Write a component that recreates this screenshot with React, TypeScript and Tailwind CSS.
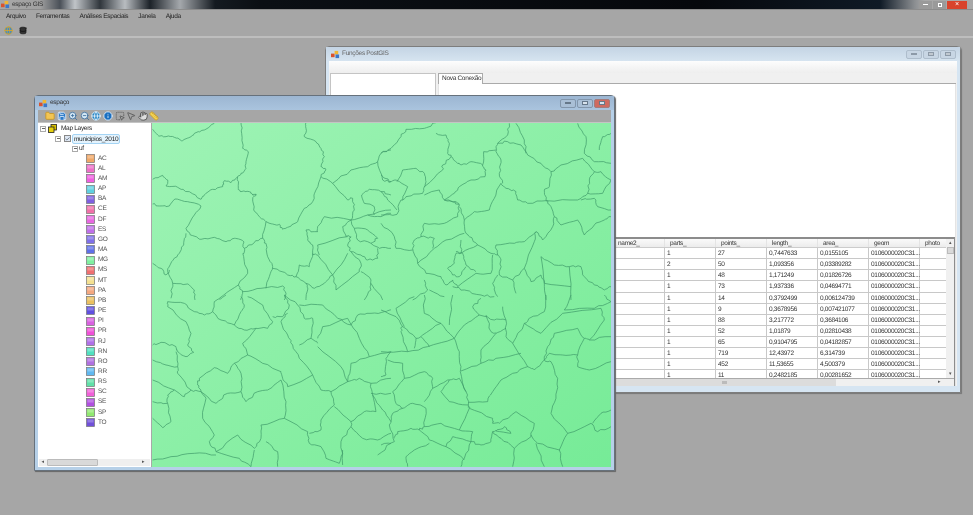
import { Folder, Save, ZoomIn, ZoomOut, Globe, Info, SquareDashedMousePointer, MousePointer2, Hand, Ruler, Database, Check } from "lucide-react";

const menus = ["Arquivo", "Ferramentas", "Análises Espaciais", "Janela", "Ajuda"];

const layers = [
  ["AC", "#f0a868"], ["AL", "#ee70c8"], ["AM", "#f060e0"], ["AP", "#60d0e0"], ["BA", "#7f60e0"],
  ["CE", "#f070a8"], ["DF", "#e868e0"], ["ES", "#c070e8"], ["GO", "#8070e8"], ["MA", "#6070e8"],
  ["MG", "#80f0a0"], ["MS", "#f07070"], ["MT", "#f4e090"], ["PA", "#f4a880"], ["PB", "#eac060"],
  ["PE", "#6050e0"], ["PI", "#d860e0"], ["PR", "#f050d8"], ["RJ", "#b070e8"], ["RN", "#50e0c0"],
  ["RO", "#b070e0"], ["RR", "#60b8f0"], ["RS", "#60e0a8"], ["SC", "#f060d8"], ["SE", "#b050e0"],
  ["SP", "#90e870"], ["TO", "#7050d8"],
];

const rows = [
  ["1", "27", "0,7447633", "0,0155105"],
  ["2", "50", "1,093356", "0,03389282"],
  ["1", "48", "1,171249", "0,01826726"],
  ["1", "73", "1,937336", "0,04694771"],
  ["1", "14", "0,3792499", "0,006124739"],
  ["1", "9", "0,3678956", "0,007421077"],
  ["1", "88", "3,217772", "0,3684106"],
  ["1", "52", "1,01879", "0,02810438"],
  ["1", "65", "0,9104795", "0,04182857"],
  ["1", "719", "12,43972", "6,314739"],
  ["1", "452", "11,53655", "4,500379"],
  ["1", "11", "0,2482185", "0,00281652"],
];

// borders traced by hand from 3x crops of the map, one group per crop
const borders: { x: number; y: number; lines: string[] }[] = [
  {
    x: 150,
    y: 120,
    lines: [
      "5,28 20,45 45,50 70,52 95,62 120,50 135,38 160,30 190,10",
      "270,8 272,40 275,85 292,95 285,125 285,145 270,160 260,170 262,205 270,215 295,215 305,225 315,222 305,240 308,270 325,290 345,305 365,312 385,313 395,328 410,322 440,305 460,265 485,245 495,210 510,170 525,150 510,140 520,110 510,85 495,65 460,50 465,25 465,8",
      "5,178 35,166 50,180 45,198 80,202 115,215 150,238 160,225 185,208 215,200 220,182 240,188 260,170",
      "5,252 25,258 55,258 72,237 110,245 150,258 130,285 105,325 118,345 150,358 190,352 225,365 250,355 275,362 280,385 310,368 335,355 345,305",
      "105,340 98,375 80,405 62,425 50,455 65,490 60,535",
      "5,430 30,445 45,465 55,450",
      "65,490 110,492 130,510 132,540",
      "335,355 345,370 350,410 365,440 355,470 345,505",
      "280,385 278,410 290,460 262,495 205,535",
      "365,445 410,465 435,470 445,435 475,440 485,400 500,405 545,465 520,490 490,505 465,490 435,470",
      "262,495 275,520 270,540",
      "275,515 330,505 395,498 405,520 400,540",
      "465,490 470,510 465,540",
      "510,170 545,190 600,150 650,140 680,125 695,95 720,90",
      "680,125 695,180 720,185",
      "545,190 590,240 605,235 610,270 600,300 575,320 585,350 600,350 590,375 600,395 630,430 625,455 555,510 545,465 590,400",
      "600,300 650,285 720,270",
      "650,285 690,290 720,280",
      "632,225 655,208 690,215 720,225",
      "632,225 640,250 670,260 670,285",
      "600,300 610,325 650,330 680,355 660,370 685,385 720,385",
      "610,325 620,360 660,370",
      "500,320 520,290 600,300",
      "500,320 500,335 465,330 470,360 485,375 485,400",
      "500,375 590,350",
      "500,375 505,405",
      "680,385 680,415 650,420 630,405 600,395",
      "630,455 660,480 660,510 640,540",
      "660,490 695,540",
    ],
  },
  {
    x: 380,
    y: 120,
    lines: [
      "0,100 30,85 60,50 75,28 130,25 165,8",
      "165,40 195,45 205,70 200,100 210,110 230,130 240,135 270,125 305,135 315,150 312,170 270,180 235,200 220,220 190,240 215,245 235,255",
      "210,110 185,135 185,150 130,200 125,220 75,230 60,240 48,283 0,285",
      "0,165 25,185 45,180 80,200 65,240",
      "48,185 65,150 105,145 130,160 135,185 130,200",
      "0,215 20,240 48,270",
      "130,225 175,210 190,240 225,245 235,255 230,290 190,310 130,310",
      "235,260 250,300 280,275 325,270 340,235 360,190 375,205 405,215 410,240 440,250 495,242 590,240 620,220 625,180 640,155 605,115 540,135 510,155 480,130 440,105 420,75 380,65 350,70",
      "385,10 380,45 350,70 345,95 360,120 355,160 365,190",
      "305,135 308,95 345,90",
      "405,10 430,60 435,100",
      "510,155 505,200 490,210 495,242 510,260 520,290 515,320 485,360 465,335 460,365 430,445 450,485 480,465 490,490",
      "520,290 540,315 590,300 610,345 640,315 670,300 690,290",
      "600,240 640,235 650,260 690,270",
      "620,220 665,220 690,180 660,155 640,155",
      "590,10 615,50 610,100 640,125 690,130",
      "655,90 665,50 690,40",
      "250,300 255,340 265,350 290,375 330,400 350,405 345,375 400,370 430,365 465,335",
      "130,310 120,350 100,360 95,385 110,430 160,385 195,360 250,340",
      "120,350 160,355 155,385",
      "0,310 40,350 45,385 95,390",
      "110,430 135,460 180,470 195,495 215,480 230,500 285,460 330,460 335,405",
      "240,360 240,400 290,375",
      "240,400 225,400 220,430 200,445 215,465 235,470 255,440",
      "225,395 245,400 255,435 285,455",
      "350,405 360,420 355,465 395,480 430,445",
      "480,410 520,435 565,440 600,440 610,470 640,495 670,510 690,500",
      "490,490 570,500",
      "565,440 570,540",
      "480,410 490,490 495,540",
      "350,465 335,490 350,530",
      "395,480 405,520",
      "130,480 140,510 95,540",
      "145,510 190,530",
      "215,500 250,510 300,525 340,530",
    ],
  },
  {
    x: 150,
    y: 295,
    lines: [
      "50,20 50,35 105,80 120,115 110,150 128,172 105,185 80,170 75,155 30,142 5,150",
      "50,20 100,25 130,50 160,60 185,50 210,75 250,90 280,105 315,100 275,145 290,180 335,205 390,230 395,250 410,275 485,240 445,190 425,150 410,120 390,80 410,55",
      "185,50 190,20 225,0",
      "250,90 270,50 280,30 270,5",
      "290,5 335,30 365,80 350,100 315,100",
      "365,65 395,65 415,30 400,0",
      "5,195 45,210 80,215 75,170",
      "80,215 80,235 120,285 150,290 165,310 155,370 190,420 175,440 195,470 260,420 310,460 330,430 330,390 400,370 470,410 475,445 510,455 525,490 565,505 575,465",
      "5,255 70,285 100,305 120,285",
      "50,300 70,285",
      "50,300 50,325",
      "5,320 50,325 60,380 35,398 5,370",
      "150,290 195,325 230,295 270,290 285,320 320,290 350,285 390,255 405,320 400,370",
      "270,290 270,235 250,205 290,180",
      "250,205 230,235 190,218 145,250 140,270 150,290",
      "400,0 440,30 460,70 485,70 480,130 445,150",
      "480,130 500,145",
      "500,130 515,95 590,70 625,130 655,185",
      "445,30 515,30 560,70 600,90 620,60 660,55 700,50 720,45",
      "500,155 570,215 590,260 600,205 655,185 720,170",
      "485,240 510,285 540,290 590,260 625,250 660,265 720,250",
      "540,290 550,330 510,375 510,405 475,415",
      "550,335 600,380 600,395 570,440 575,510",
      "600,380 640,350 675,350 665,300 660,265",
      "600,395 635,430 680,435 720,415",
      "195,470 265,490 300,515",
      "5,495 60,485 130,475 195,480",
      "310,465 300,515",
      "345,440 380,470 380,515",
      "660,295 720,295",
      "665,300 695,345 720,380",
      "680,480 720,445",
    ],
  },
  {
    x: 380,
    y: 295,
    lines: [
      "0,45 45,65 65,95 105,130 125,120 180,85 220,130",
      "220,130 235,170 238,230 255,290 262,330 265,340 335,370 335,385 355,385",
      "220,130 250,90 295,60 340,75 375,75 375,125 395,145 440,215",
      "295,60 275,35 300,10",
      "315,60 330,110 345,115 375,100",
      "345,115 300,165 300,205 240,228",
      "300,205 345,190 420,175",
      "440,215 395,235 360,255 335,290 320,320 262,322",
      "395,145 430,85 480,115 545,55 660,40 670,75 625,135 690,125",
      "430,85 445,70 490,50 495,0",
      "550,45 570,0",
      "550,45 640,40 690,20 670,0",
      "625,135 610,130 590,100 520,115 500,155 490,195 460,225 440,215",
      "490,195 505,175 545,180 590,180 610,130",
      "590,180 590,215 625,225 690,200",
      "490,195 510,200 530,250 525,310 510,355 560,415 630,385 650,410 690,395",
      "635,385 660,355 690,345",
      "560,415 535,465 545,515",
      "450,420 470,445 535,465",
      "355,385 405,350 460,385 450,425 400,460 395,515",
      "400,460 360,430 335,410 345,408 390,415 370,395 345,408",
      "335,410 330,440 300,450 270,440 250,490 240,515",
      "270,440 275,410 235,405 265,340",
      "235,405 180,385 130,395 135,340 95,325 65,340 35,355 25,390 40,440 0,450",
      "130,395 115,405 90,400 50,410 40,430",
      "115,405 145,435 195,455 215,425 270,440",
      "195,455 250,495",
      "145,445 100,465 75,485 80,515",
      "0,170 80,170 60,110 65,95",
      "80,170 140,155 220,130",
      "105,130 100,160",
      "145,155 120,125",
      "30,170 15,190 15,240 0,245",
      "20,195 65,205 70,250 130,230 155,250 155,280 130,320",
      "35,290 70,250",
      "35,290 45,325 65,340",
      "155,280 200,255 235,250 255,290",
      "205,255 180,290 205,320 262,330",
      "130,0 130,55 180,85",
      "215,0 205,90",
      "45,40 100,5",
      "45,40 70,95",
      "365,35 375,75",
      "465,445 490,515",
    ],
  },
];

// breaks each straight run up with a small offset so the border looks hand-surveyed
function wiggle(line: string, seed: number) {
  const pts = line.split(" ").map((p) => p.split(",").map(Number));
  const out: string[] = [];
  let s = seed;
  pts.forEach((p, i) => {
    out.push(`${p[0]},${p[1]}`);
    const next = pts[i + 1];
    if (!next) return;
    for (let k = 1; k < 4; k++) {
      s = (s * 9301 + 49297) % 233280;
      const a = (s / 233280 - 0.5) * 6;
      s = (s * 9301 + 49297) % 233280;
      const b = (s / 233280 - 0.5) * 6;
      out.push(`${p[0] + ((next[0] - p[0]) * k) / 4 + a},${p[1] + ((next[1] - p[1]) * k) / 4 + b}`);
    }
  });
  return out.join(" ");
}

function AppIcon() {
  return (
    <svg viewBox="0 0 10 10" className="w-[9px] h-[9px] shrink-0">
      <rect x="0" y="4" width="4" height="4" fill="#d9532c" />
      <rect x="4" y="1" width="4" height="4" fill="#f2b632" />
      <rect x="5" y="5" width="4" height="4" fill="#3b78c9" />
    </svg>
  );
}

function WinButtons({ active }: { active?: boolean }) {
  return (
    <div className="flex gap-px">
      {[0, 1, 2].map((i) => (
        <div
          key={i}
          className={`w-[16px] h-[9px] rounded-[2px] border flex items-center justify-center ${
            active
              ? i === 2
                ? "bg-[#cf6a60] border-[#a37b7c]"
                : "bg-[#a9bfd6] border-[#8296ac]"
              : "bg-[#c8d6e4] border-[#aebdcc]"
          }`}
        >
          <div
            className={`w-[6px] ${i === 0 ? "h-[2px]" : "h-[4px]"} border ${
              active ? "border-[#66788a] bg-[#d8e2ec]" : "border-[#8d9aa8] bg-[#c0c8d0]"
            }`}
          />
        </div>
      ))}
    </div>
  );
}

function Expander() {
  return (
    <div className="w-[6px] h-[6px] border border-[#aaa] flex items-center justify-center shrink-0">
      <div className="w-[3px] h-px bg-[#666]" />
    </div>
  );
}

function MapView() {
  return (
    <div className="flex-1 min-w-0 bg-linear-to-br from-[#9ef3b5] to-[#76eb97] border-l border-[#a8a8a8] overflow-hidden">
      <svg viewBox="151 123 459 344" preserveAspectRatio="none" className="block w-full h-full">
        {borders.map((crop, c) => (
          <g key={c} transform={`translate(${crop.x} ${crop.y}) scale(0.3333)`}>
            {crop.lines.map((line, i) => (
              <polyline
                key={i}
                points={wiggle(line, c * 100 + i + 7)}
                fill="none"
                stroke="#3d9a68"
                strokeWidth="0.7"
                strokeLinejoin="round"
                vectorEffect="non-scaling-stroke"
              />
            ))}
          </g>
        ))}
      </svg>
    </div>
  );
}

function LayerTree() {
  return (
    <div className="w-[113px] shrink-0 bg-white flex flex-col text-[6.5px] text-[#333]">
      <div className="flex-1 min-h-0">
        <div className="h-[10px] flex items-center pl-[2px] mt-[0.5px]">
          <Expander />
          <svg viewBox="0 0 9 9" className="ml-[2px] w-[9px] h-[9px] shrink-0">
            <rect x="3" y="0.5" width="5.5" height="5.5" fill="#d8c000" stroke="#222" strokeWidth="0.8" />
            <rect x="0.5" y="3" width="5.5" height="5.5" fill="#e6d010" stroke="#222" strokeWidth="0.8" />
          </svg>
          <span className="ml-[4px] text-[#222]">Map Layers</span>
        </div>
        <div className="h-[10px] flex items-center pl-[17px]">
          <Expander />
          <div className="ml-[3px] w-[7px] h-[7px] border border-[#888] bg-[#dde6f2] flex items-center justify-center">
            <Check className="w-[6px] h-[6px] text-[#345]" strokeWidth={3} />
          </div>
          <span className="ml-[1px] px-[1px] h-[10px] leading-[9px] rounded-[2px] border border-[#a4d4f4] bg-[#e4f3fd] text-[#222] whitespace-nowrap">
            municipios_2010
          </span>
        </div>
        <div className="h-[10px] flex items-center pl-[34px]">
          <Expander />
          <span className="ml-[1px]">uf</span>
        </div>
        <div className="pl-[48px]">
          {layers.map(([name, color]) => (
            <div key={name} className="h-[10.17px] flex items-center">
              <svg viewBox="0 0 9 9" className="w-[9px] h-[9px] shrink-0">
                <rect x="0.5" y="0.5" width="8" height="8" fill={color} stroke="#777" strokeWidth="0.7" />
                <rect x="1.5" y="1.5" width="6" height="3" fill="#fff" opacity="0.25" />
              </svg>
              <span className="ml-[3px] text-[#555]">{name}</span>
            </div>
          ))}
        </div>
      </div>
      <div className="h-[7px] mx-[1px] mb-[1px] bg-[#efefef] flex items-center shrink-0">
        <span className="w-[7px] text-[5px] text-[#555] text-center">◂</span>
        <div className="ml-[1px] w-[51px] h-[7px] bg-[#d9d9d9] border border-[#bbb] rounded-[1px]" />
        <div className="flex-1" />
        <span className="w-[14px] text-[5px] text-[#555] text-center">▸</span>
      </div>
    </div>
  );
}

function DataGrid() {
  return (
    <div className="h-[149px] ml-auto w-[343px] border-t-2 border-x border-[#8c8c8c] bg-white flex flex-col text-[6.5px] text-[#333] shrink-0">
      <div className="flex flex-1 min-h-0">
        <div className="flex-1 min-w-0 overflow-hidden">
          <div className="h-[9px] flex bg-linear-to-b from-[#fafafa] to-[#ececec] border-b border-[#ccc]">
            {["name2_", "parts_", "points_", "length_", "area_", "geom", "photo"].map((h, i) => (
              <div
                key={h}
                className={`${i === 0 ? "w-[52px]" : "w-[51px]"} shrink-0 pl-[5px] leading-[9px] border-r border-[#e4e4e4]`}
              >
                {h}
              </div>
            ))}
          </div>
          {rows.map((r, i) => (
            <div key={i} className="h-[11.14px] flex border-b border-[#c8c8c8]">
              <div className="w-[52px] shrink-0 border-r border-[#c8c8c8]" />
              {r.map((v, j) => (
                <div key={j} className="w-[51px] shrink-0 pl-[2px] leading-[11px] border-r border-[#c8c8c8]">
                  {v}
                </div>
              ))}
              <div className="w-[51px] shrink-0 pl-[2px] leading-[11px] border-r border-[#c8c8c8] whitespace-nowrap">0106000020C31...</div>
              <div className="w-[51px] shrink-0" />
            </div>
          ))}
        </div>
        <div className="w-[8px] shrink-0 bg-[#f0f0f0] flex flex-col items-center text-[5px] text-[#555]">
          <span className="h-[8px] leading-[8px]">▴</span>
          <div className="w-[7px] h-[7px] bg-[#d9d9d9] border border-[#bbb]" />
          <div className="flex-1" />
          <span className="h-[8px] leading-[8px]">▾</span>
        </div>
      </div>
      <div className="h-[8px] bg-[#f0f0f0] border-t border-[#aaa] flex items-center shrink-0">
        <div className="w-[223px] h-[7px] bg-[#dcdcdc] flex items-center justify-center">
          <div className="w-[5px] h-[3px] bg-[#bbb]" />
        </div>
        <div className="flex-1" />
        <span className="w-[16px] text-[5px] text-[#555]">▸</span>
      </div>
    </div>
  );
}

function PostgisWindow() {
  return (
    <div className="absolute left-[325px] top-[8px] w-[636px] h-[347px] rounded-t-[4px] border border-[#7d7d7d] bg-[#d6e5f2] flex flex-col shadow-[1px_1px_1px_#777]">
      <div className="h-[14px] shrink-0 flex items-center pl-[5px] pr-[4px] bg-linear-to-b from-[#c4d4e4] to-[#d6e4f0]">
        <AppIcon />
        <span className="ml-[2px] text-[6.5px] text-[#666]">Funções PostGIS</span>
        <div className="flex-1" />
        <WinButtons />
      </div>
      <div className="flex-1 min-h-0 mx-[3px] mb-[6px] flex flex-col bg-[#f0f0f0]">
        <div className="h-[12px] shrink-0 bg-linear-to-b from-[#fdfdfd] to-[#eeeeee]" />
        <div className="flex-1 min-h-0 flex gap-[2px] px-px">
          <div className="w-[106px] shrink-0 bg-white border border-[#c4c4c4]" />
          <div className="flex-1 min-w-0 flex flex-col">
            <div className="h-[11px] shrink-0 flex">
              <div className="w-[45px] bg-white border border-b-0 border-[#aaa] text-[6.5px] leading-[10px] text-[#333] pl-[3px] whitespace-nowrap">
                Nova Conexão
              </div>
              <div className="flex-1 border-b border-[#aaa]" />
            </div>
            <div className="flex-1 min-h-0 bg-white pt-[153px] border-x border-[#e4e4e4]">
              <DataGrid />
            </div>
          </div>
        </div>
      </div>
    </div>
  );
}

function MapWindow() {
  const tools = [
    { Icon: Folder, cls: "text-[#c9941f] fill-[#f3c553]" },
    { Icon: Save, cls: "text-[#f4f8ff] fill-[#2a79c8]" },
    { Icon: ZoomIn, cls: "text-[#3e6f9e] fill-[#d3e7f5]" },
    { Icon: ZoomOut, cls: "text-[#3e6f9e] fill-[#d3e7f5]" },
    { Icon: Globe, cls: "text-[#e8f5ff] fill-[#2a86c4]" },
    { Icon: Info, cls: "text-[#eaf4ff] fill-[#1a6fc0]" },
    { Icon: SquareDashedMousePointer, cls: "text-[#555]" },
    { Icon: MousePointer2, cls: "text-[#555]" },
    { Icon: Hand, cls: "text-[#444] fill-[#ddd]" },
    { Icon: Ruler, cls: "text-[#c89a20] fill-[#f2d255]" },
  ];
  return (
    <div className="absolute left-[34px] top-[57px] w-[581px] h-[376px] rounded-t-[4px] border border-[#66717c] bg-[#b6d0e8] flex flex-col shadow-[1px_1px_1px_#666]">
      <div className="h-[14px] shrink-0 flex items-center pl-[4px] pr-[4px] bg-linear-to-b from-[#9cb6d2] to-[#aac4de]">
        <AppIcon />
        <span className="ml-[2px] text-[6.5px] text-[#333]">espaço</span>
        <div className="flex-1" />
        <WinButtons active />
      </div>
      <div className="flex-1 min-h-0 mx-[3px] mb-[3px] flex flex-col">
        <div className="h-[13px] shrink-0 bg-[#a6a6a6] border-b border-[#c4c4c4] flex items-center pl-[7px] gap-[1.6px]">
          {tools.map(({ Icon, cls }, i) => (
            <Icon key={i} className={`w-[10px] h-[10px] ${cls}`} strokeWidth={2} />
          ))}
        </div>
        <div className="flex-1 min-h-0 flex">
          <LayerTree />
          <MapView />
        </div>
      </div>
    </div>
  );
}

export default function App() {
  return (
    <div className="w-[973px] h-[515px] overflow-hidden bg-[#a6a6a6] flex flex-col font-['Liberation_Sans',sans-serif] tracking-[-0.3px] [text-rendering:geometricPrecision] blur-[0.4px]">
      {/* main window title */}
      <div className="h-[9px] shrink-0 flex items-center pl-[1px] bg-[linear-gradient(90deg,#a8a8a8_0,#a0a0a0_40px,#4a5058_60px,#c0c4c8_75px,#30363c_100px,#b8bcc0_125px,#1c2228_150px,#a4a8ac_180px,#141a20_215px,#0b0f14_260px,#06080c_700px,#0f1a26_880px,#8c8f92_915px,#a8a8a8_925px)]">
        <AppIcon />
        <span className="ml-[2px] text-[6.5px] text-[#333]">espaço GIS</span>
        <div className="flex-1" />
        <div className="flex h-[9px] items-center pr-[6px] gap-[1px]">
          <div className="w-[13px] h-[8px] flex items-center justify-center bg-[#9a9a9a]">
            <div className="w-[5px] h-[1px] bg-white" />
          </div>
          <div className="w-[13px] h-[8px] flex items-center justify-center bg-[#9a9a9a]">
            <div className="w-[4px] h-[4px] border border-white" />
          </div>
          <div className="w-[20px] h-[8px] flex items-center justify-center bg-[#d9432c] text-white text-[7px] leading-none">×</div>
        </div>
      </div>
      {/* menu */}
      <div className="h-[15px] shrink-0 flex items-center pl-[6px] gap-[10px] text-[6.5px] text-[#222] border-t border-[#8c8c8c]">
        {menus.map((m) => (
          <span key={m}>{m}</span>
        ))}
      </div>
      {/* toolbar */}
      <div className="h-[12px] shrink-0 flex items-center pl-[4px] gap-[6px] border-b-2 border-[#bdbdbd] box-content">
        <Globe className="w-[9px] h-[9px] text-[#e2a820] fill-[#3a8ad0]" strokeWidth={2} />
        <Database className="w-[8px] h-[9px] text-[#111] fill-[#333]" strokeWidth={2} />
      </div>
      {/* mdi desktop */}
      <div className="relative flex-1 min-h-0">
        <PostgisWindow />
        <MapWindow />
      </div>
    </div>
  );
}
